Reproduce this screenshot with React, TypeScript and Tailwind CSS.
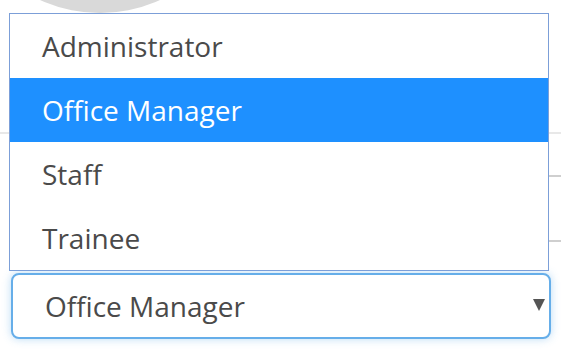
import React from "react"

const roles = ["Administrator", "Office Manager", "Staff", "Trainee"]

export default function App() {
  const selected = "Office Manager"

  return (
    <div
      className="relative h-[355px] w-[561px] overflow-hidden bg-white"
      style={{ fontFamily: '"Open Sans", "Noto Sans", sans-serif' }}
    >
      {/* page behind the open menu */}
      <div className="flex flex-col">
        <div className="ml-[-45px] mt-[-277px] h-[290px] w-[290px] shrink-0 rounded-full bg-[#d9d9d9]" />
        <div className="mt-[119px] h-[2px] w-full bg-[#e8e8e8]" />
        <div className="ml-[280px] mt-[41px] h-[67px] w-[300px] border-y-2 border-[#cfcfcf]" />
        <div className="ml-[11px] mt-[31px] flex h-[66px] w-[540px] items-center justify-between rounded-[8px] border-2 border-[#66aee9] bg-white pl-[32px] pr-[4px] shadow-[0_0_8px_rgba(102,175,233,0.45)]">
          <span className="text-[28px] leading-none text-[#4a4a4a]">{selected}</span>
          <svg width="12" height="12" viewBox="0 0 12 12" className="mb-[2px]">
            <path d="M0 0 L12 0 L6 12 Z" fill="#555555" />
          </svg>
        </div>
      </div>

      {/* open option list */}
      <ul className="absolute left-[9px] top-[13px] w-[540px] border border-[#7c9fd8] bg-white">
        {roles.map((role) => (
          <li
            key={role}
            className={
              role === selected
                ? "flex h-[64px] items-center bg-[#1e90ff] pl-[32px] text-[28px] text-white"
                : "flex h-[64px] items-center pl-[32px] text-[28px] text-[#4a4a4a]"
            }
          >
            {role}
          </li>
        ))}
      </ul>
    </div>
  )
}
